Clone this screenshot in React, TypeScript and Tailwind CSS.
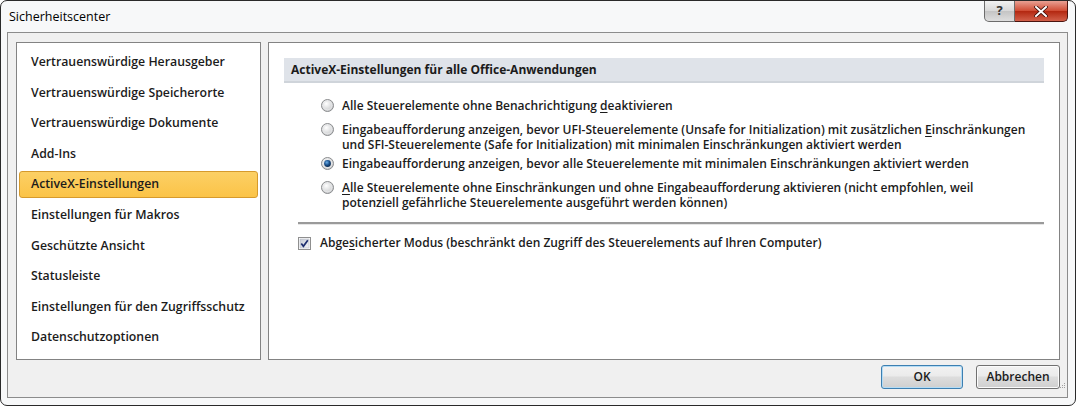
import React from "react";

const sidebarItems = [
  "Vertrauenswürdige Herausgeber",
  "Vertrauenswürdige Speicherorte",
  "Vertrauenswürdige Dokumente",
  "Add-Ins",
  "ActiveX-Einstellungen",
  "Einstellungen für Makros",
  "Geschützte Ansicht",
  "Statusleiste",
  "Einstellungen für den Zugriffsschutz",
  "Datenschutzoptionen",
];

const Radio = ({ checked }: { checked?: boolean }) => (
  <svg width="13" height="13" viewBox="0 0 13 13" className="shrink-0 mt-[1px]">
    <defs>
      <radialGradient id="rbg" cx="0.4" cy="0.35" r="0.7">
        <stop offset="0" stopColor="#ffffff" />
        <stop offset="1" stopColor="#c4c6c8" />
      </radialGradient>
      <radialGradient id="rdot" cx="0.4" cy="0.35" r="0.7">
        <stop offset="0" stopColor="#6aaee8" />
        <stop offset="0.55" stopColor="#1a4f8a" />
        <stop offset="1" stopColor="#0a2548" />
      </radialGradient>
    </defs>
    <circle cx="6.5" cy="6.5" r="6" fill="url(#rbg)" stroke="#8a8c8e" />
    <circle cx="6.5" cy="6.5" r="4.3" fill="none" stroke="#e8e9ea" strokeWidth="0.8" />
    {checked && <circle cx="6.5" cy="6.5" r="3.4" fill="url(#rdot)" />}
  </svg>
);

const CheckBox = () => (
  <svg width="13" height="13" viewBox="0 0 13 13" className="shrink-0">
    <defs>
      <linearGradient id="cbg" x1="0" y1="0" x2="1" y2="1">
        <stop offset="0" stopColor="#c6cbd6" />
        <stop offset="1" stopColor="#f2f3f6" />
      </linearGradient>
    </defs>
    <rect x="0.5" y="0.5" width="12" height="12" fill="#fff" stroke="#8f8f8f" />
    <rect x="2" y="2" width="9" height="9" fill="url(#cbg)" stroke="#b5bac4" strokeWidth="0.6" />
    <path d="M3.3 6.4 L5.4 9.2 L9.8 3.2" fill="none" stroke="#1c2d6e" strokeWidth="1.7" />
  </svg>
);

const U = ({ children }: { children: React.ReactNode }) => (
  <span className="underline underline-offset-2">{children}</span>
);

export default function App() {
  return (
    <div
      className="w-[1076px] h-[406px] bg-white text-[12px] text-[#1b1b1b]"
      style={{ fontFamily: '"Segoe UI", "Open Sans", "Noto Sans", sans-serif' }}
    >
      <div className="w-full h-full flex flex-col rounded-[7px] border border-[#2a2a2a] bg-[#f7f8f9]">
        {/* title bar */}
        <div className="h-[31px] flex items-start justify-between">
          <div className="pl-[8px] pt-[7px] text-[12.5px] font-medium text-black">Sicherheitscenter</div>
          <div className="flex mr-[7px]">
            <div className="w-[31px] h-[21px] flex items-center justify-center rounded-bl-[5px] border border-t-0 border-[#6c6c6c] bg-[linear-gradient(#f2f2f2,#d8d8d8_50%,#c4c4c4_51%,#dedede)] font-bold text-[13px] text-[#333]">
              ?
            </div>
            <div className="w-[53px] h-[21px] flex items-center justify-center rounded-br-[5px] border border-t-0 border-l-0 border-[#4a1510] bg-[linear-gradient(#e8a093,#cf4a32_50%,#b32710_51%,#d2604a)]">
              <svg width="14" height="11" viewBox="0 0 14 11">
                <path d="M2 1 L12 10 M12 1 L2 10" stroke="#3a0a05" strokeWidth="3.6" strokeLinecap="square" />
                <path d="M2 1 L12 10 M12 1 L2 10" stroke="#ffffff" strokeWidth="2" strokeLinecap="square" />
              </svg>
            </div>
          </div>
        </div>

        {/* client area */}
        <div className="flex-1 flex flex-col ml-[6px] mr-[7px] mb-[7px] border border-[#8c8c8c] bg-[#f0f0f0] pl-[8px] pr-[7px] pt-[9px]">
          <div className="h-[318px] flex gap-[7px]">
            {/* navigation */}
            <div className="w-[245px] border border-[#838383] bg-white px-[2px] pt-[4px] flex flex-col text-[12.3px] font-semibold">
              {sidebarItems.map((item) => (
                <div key={item} className="h-[30.6px] flex items-center">
                  <div
                    className={
                      item === "ActiveX-Einstellungen"
                        ? "w-full h-[27px] flex items-center pl-[11px] rounded-[3px] border border-[#d69a2c] bg-[linear-gradient(#fcd065,#fbc347)]"
                        : "w-full h-[27px] flex items-center pl-[11px] border border-transparent"
                    }
                  >
                    {item}
                  </div>
                </div>
              ))}
            </div>

            {/* settings page */}
            <div className="flex-1 border border-[#838383] bg-white px-[15px] pt-[15px] font-semibold">
              <div className="h-[25px] flex items-center pl-[7px] bg-[#dfe3e9] border-b-2 border-[#cfd4da] font-bold">
                ActiveX-Einstellungen für alle Office-Anwendungen
              </div>

              <div className="pl-[37px] pt-[15px] flex flex-col leading-[15px]">
                <div className="flex gap-[8px] items-start">
                  <Radio />
                  <span className="whitespace-nowrap">
                    Alle Steuerelemente ohne Benachrichtigung <U>d</U>eaktivieren
                  </span>
                </div>
                <div className="flex gap-[8px] items-start mt-[9px]">
                  <Radio />
                  <span className="whitespace-nowrap">
                    Eingabeaufforderung anzeigen, bevor UFI-Steuerelemente (Unsafe for Initialization) mit zusätzlichen{" "}
                    <U>E</U>inschränkungen
                    <br />
                    und SFI-Steuerelemente (Safe for Initialization) mit minimalen Einschränkungen aktiviert werden
                  </span>
                </div>
                <div className="flex gap-[8px] items-start mt-[4px]">
                  <Radio checked />
                  <span className="whitespace-nowrap">
                    Eingabeaufforderung anzeigen, bevor alle Steuerelemente mit minimalen Einschränkungen <U>a</U>ktiviert werden
                  </span>
                </div>
                <div className="flex gap-[8px] items-start mt-[9px]">
                  <Radio />
                  <span className="whitespace-nowrap">
                    <U>A</U>lle Steuerelemente ohne Einschränkungen und ohne Eingabeaufforderung aktivieren (nicht empfohlen, weil
                    <br />
                    potenziell gefährliche Steuerelemente ausgeführt werden können)
                  </span>
                </div>
              </div>

              <div className="ml-[14px] mt-[12px] border-t-2 border-[#9a9a9a] border-b border-b-[#e6e6e6]" />

              <div className="ml-[14px] mt-[9px] flex items-center gap-[9px]">
                <CheckBox />
                <span>
                  Abge<U>s</U>icherter Modus (beschränkt den Zugriff des Steuerelements auf Ihren Computer)
                </span>
              </div>
            </div>
          </div>

          {/* dialog buttons */}
          <div className="flex justify-end gap-[13px] pt-[5px] relative">
            <button className="w-[82px] h-[24px] rounded-[3px] border border-[#3c7fb1] bg-[linear-gradient(#f2f2f2,#ebebeb_45%,#dddddd_50%,#cfcfcf)] shadow-[inset_0_0_0_1px_#b4dcf5] font-semibold">
              OK
            </button>
            <button className="w-[84px] h-[24px] rounded-[3px] border border-[#707070] bg-[linear-gradient(#f2f2f2,#ebebeb_45%,#dddddd_50%,#cfcfcf)] shadow-[inset_0_0_0_1px_#fbfbfb] font-semibold">
              Abbrechen
            </button>
            <svg width="6" height="6" viewBox="0 0 6 6" className="absolute right-[-6px] bottom-[0px]">
              <rect x="4" y="0" width="1" height="1" fill="#a0a0a0" />
              <rect x="2" y="2" width="1" height="1" fill="#a0a0a0" />
              <rect x="4" y="2" width="1" height="1" fill="#a0a0a0" />
              <rect x="0" y="4" width="1" height="1" fill="#a0a0a0" />
              <rect x="2" y="4" width="1" height="1" fill="#a0a0a0" />
              <rect x="4" y="4" width="1" height="1" fill="#a0a0a0" />
            </svg>
          </div>
        </div>
      </div>
    </div>
  );
}
